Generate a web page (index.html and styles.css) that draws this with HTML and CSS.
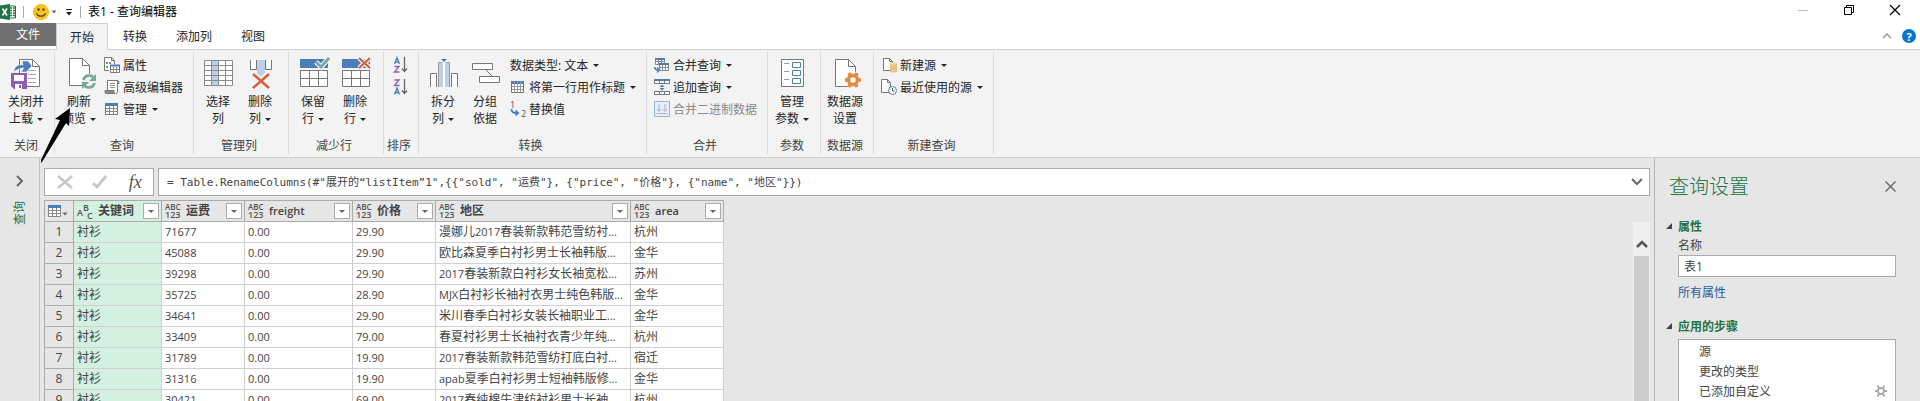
FILE: index.html
```html
<!DOCTYPE html>
<html lang="zh-CN">
<head>
    <meta charset="UTF-8">
    <meta name="viewport" content="width=device-width, initial-scale=1.0">
    <title>表1 - 查询编辑器</title>
    <link rel="stylesheet" href="styles.css">
</head>
<body>
    <!-- title bar -->
    <header class="titlebar">
        <svg class="excel" width="16" height="16" viewBox="0 0 16 16">
            <path d="M9 2h6.500v12H9z" fill="#fff" stroke="#217346"/>
            <path d="M10 4h2M13 4h2M10 6.500h2M13 6.500h2M10 9h2M13 9h2M10 11.500h2M13 11.500h2" stroke="#217346" stroke-width="1.300"/>
            <path d="M0 1.500L10 0v16L0 14.500z" fill="#217346"/>
            <path d="M2.500 4.500l4.500 7M7 4.500l-4.500 7" stroke="#fff" stroke-width="1.700"/>
        </svg>
        <span class="bar"></span>
        <button class="plain smiley" aria-label="反馈">
            <svg width="24" height="16" viewBox="0 0 24 16">
                <circle cx="8" cy="8" r="7.500" fill="#fcc419" stroke="#f5b60f"/>
                <circle cx="5.500" cy="5.500" r="1.200" fill="#444"/>
                <circle cx="10.500" cy="5.500" r="1.200" fill="#444"/>
                <path d="M3.500 9.200c1.500 4 7.500 4 9 0" fill="none" stroke="#444" stroke-width="1.200"/>
                <path d="M18.500 6.500h5L21 9.500z" fill="#666"/>
            </svg>
        </button>
        <button class="plain qat" aria-label="自定义快速访问工具栏">
            <svg width="8" height="8" viewBox="0 0 8 8"><path d="M1 1.500h6" stroke="#222"/><path d="M1 4h6L4 7.500z" fill="#222"/></svg>
        </button>
        <span class="bar"></span>
        <h1>表1 - 查询编辑器</h1>
        <div class="window-buttons">
            <button class="plain" aria-label="最小化"><svg width="10" height="10" viewBox="0 0 10 10"><path d="M0 5.500h10" stroke="#bbb"/></svg></button>
            <button class="plain" aria-label="还原"><svg width="10" height="10" viewBox="0 0 10 10"><path d="M.5 2.500h7v7h-7zM2.500 2.500v-2h7v7h-2" fill="none" stroke="#000"/></svg></button>
            <button class="plain" aria-label="关闭"><svg width="10" height="10" viewBox="0 0 10 10"><path d="M0 0l10 10M10 0L0 10" stroke="#000" stroke-width="1.200"/></svg></button>
        </div>
    </header>

    <nav class="tabs">
        <button class="tab file">文件</button>
        <button class="tab active">开始</button>
        <button class="tab">转换</button>
        <button class="tab">添加列</button>
        <button class="tab">视图</button>
        <div class="tabs-right">
            <button class="plain" aria-label="折叠功能区"><svg width="10" height="6" viewBox="0 0 10 6"><path d="M1 5l4-4 4 4" fill="none" stroke="#999" stroke-width="1.500"/></svg></button>
            <button class="plain help">?</button>
        </div>
    </nav>

    <!-- ribbon -->
    <section class="ribbon">
        <div class="group first">
            <div class="tools">
                <button class="big">
                    <svg width="34" height="34" viewBox="0 0 34 34">
                        <path d="M10.500 3.500h13l7 7v20h-20z" fill="#fff" stroke="#777"/>
                        <path d="M23.500 3.500v7h7" fill="none" stroke="#777"/>
                        <path d="M19 14.500h8M19 18.500h8M19 22.500h8M19 26.500h8" stroke="#aaa"/>
                        <path d="M5 16c0-6 5-8 9-7l-1-4 6 0 4 5-6 6h-5l3-4c-4 0-6 1-10 4z" fill="#4a7ebb" stroke="#f3f3f3" stroke-width=".6"/>
                        <path d="M2 17h16v16H5l-3-3z" fill="#8e5bb5"/>
                        <path d="M5 19h10v6H5zM6 28h7v5H6z" fill="#fff"/>
                        <path d="M10 29h2v3h-2z" fill="#8e5bb5"/>
                    </svg>
                    <span>关闭并<br>上载 <i class="caret"></i></span>
                </button>
            </div>
            <h2>关闭</h2>
        </div>

        <div class="group">
            <div class="tools">
                <button class="big">
                    <svg width="34" height="34" viewBox="0 0 34 34">
                        <path d="M7.500 2.500h13l7 7v20h-20z" fill="#fff" stroke="#777"/>
                        <path d="M20.500 2.500v7h7" fill="none" stroke="#777"/>
                        <circle cx="27" cy="25.500" r="8" fill="#f3f3f3"/>
                        <path d="M21.500 24c1-5 8-6 10-2M32.500 27c-1 5-8 6-10 2" fill="none" stroke="#76a797" stroke-width="2.600"/>
                        <path d="M34 18v7h-7zM20 33v-7h7z" fill="#76a797"/>
                    </svg>
                    <span>刷新<br>预览 <i class="caret"></i></span>
                </button>
                <div class="list">
                    <button class="small">
                        <svg width="16" height="16" viewBox="0 0 16 16">
                            <path d="M5 13.500H.5V.5h7l3 3V7" fill="#fff" stroke="#777"/><path d="M7.500.5v3h3" fill="none" stroke="#777"/>
                            <path d="M2 5h2v2H2zM2 9h2v2H2zM5 5h2v2H5z" fill="#888"/>
                            <path d="M6.500 8.500h9v7h-9z" fill="#fff" stroke="#777"/><path d="M6 7.500h10v2H6z" fill="#4a7ebb"/><path d="M9.500 10v5M12.500 10v5M7 12.500h8" stroke="#888"/>
                        </svg>属性
                    </button>
                    <button class="small">
                        <svg width="16" height="16" viewBox="0 0 16 16">
                            <path d="M3.500 11V1.500h10V13c0 1-1 1.500-2 1.500H3" fill="#fff" stroke="#777"/>
                            <path d="M13 1.500c2 0 2 2 2 3h-2M1 11.500h9v3H2.500c-1 0-2-1-1.500-3z" fill="#888" stroke="#777"/>
                            <path d="M6 4.500h5M6 6.500h5M6 8.500h5" stroke="#999"/>
                        </svg>高级编辑器
                    </button>
                    <button class="small">
                        <svg width="16" height="16" viewBox="0 0 16 16">
                            <path d="M1.500 3.500h12v10h-12z" fill="#fff" stroke="#777"/><path d="M1 2h13v3H1z" fill="#4a7ebb"/>
                            <path d="M5.500 5v8M9.500 5v8M2 7.500h11M2 10.500h11" stroke="#888"/>
                        </svg>管理<i class="caret"></i>
                    </button>
                </div>
            </div>
            <h2>查询</h2>
        </div>

        <div class="group">
            <div class="tools">
                <button class="big">
                    <svg width="34" height="34" viewBox="0 0 34 34">
                        <path d="M3.500 4.500h28v25h-28z" fill="#fff"/><path d="M10 5h7v24h-7z" fill="#bdd0e6"/>
                        <path d="M3.500 4.500h28v25h-28zM3 9.500h28M3 14.500h28M3 19.500h28M3 24.500h28M10.500 5v24M17.500 5v24M24.500 5v24" fill="none" stroke="#8a8a8a"/>
                    </svg>
                    <span>选择<br>列</span>
                </button>
                <button class="big">
                    <svg width="34" height="34" viewBox="0 0 34 34">
                        <path d="M7.500 4v9.500h6V4M28.500 4v9.500h-6V4" fill="#fff" stroke="#777"/>
                        <path d="M14 4h8v13l-4 4-4-4z" fill="#bdd0e6"/>
                        <path d="M10 18l16 14M26 18L10 32" stroke="#d65f3c" stroke-width="2.600"/>
                    </svg>
                    <span>删除<br>列 <i class="caret"></i></span>
                </button>
            </div>
            <h2>管理列</h2>
        </div>

        <div class="group">
            <div class="tools">
                <button class="big">
                    <svg width="34" height="34" viewBox="0 0 34 34">
                        <path d="M4 3h28v9H4z" fill="#4a7ebb"/>
                        <path d="M4.500 14.500h27v16h-27zM4 22.500h28M13.500 15v16M22.500 15v16" fill="#fff" stroke="#777"/>
                        <path d="M20 6l5 5 8-9" fill="none" stroke="#f3f3f3" stroke-width="5"/>
                        <path d="M20 6l5 5 8-9" fill="none" stroke="#76a797" stroke-width="2.800"/>
                    </svg>
                    <span>保留<br>行 <i class="caret"></i></span>
                </button>
                <button class="big">
                    <svg width="34" height="34" viewBox="0 0 34 34">
                        <path d="M4 3h28v9H4z" fill="#4a7ebb"/>
                        <path d="M4.500 14.500h27v16h-27zM4 22.500h28M13.500 15v16M22.500 15v16" fill="#fff" stroke="#777"/>
                        <path d="M21 2l11 10M32 2L21 12" stroke="#f3f3f3" stroke-width="4.600"/>
                        <path d="M21 2l11 10M32 2L21 12" stroke="#d65f3c" stroke-width="2.200"/>
                    </svg>
                    <span>删除<br>行 <i class="caret"></i></span>
                </button>
            </div>
            <h2>减少行</h2>
        </div>

        <div class="group sort">
            <div class="tools">
                <div class="list">
                    <button class="small" aria-label="升序排序">
                        <svg width="16" height="16" viewBox="0 0 16 16">
                            <path d="M1.500 7L4 0.500 6.500 7M2.200 5h3.600" fill="none" stroke="#4a7ebb" stroke-width="1.300"/>
                            <path d="M1.500 9.500H6L1.500 15H6.500" fill="none" stroke="#8e5bb5" stroke-width="1.300"/>
                            <path d="M11.500 0v14M9 11.500l2.500 3 2.500-3" fill="none" stroke="#666" stroke-width="1.300"/>
                        </svg>
                    </button>
                    <button class="small" aria-label="降序排序">
                        <svg width="16" height="16" viewBox="0 0 16 16">
                            <path d="M1.500 1H6L1.500 6.500H6.500" fill="none" stroke="#8e5bb5" stroke-width="1.300"/>
                            <path d="M1.500 15.500L4 9 6.500 15.500M2.200 13.500h3.600" fill="none" stroke="#4a7ebb" stroke-width="1.300"/>
                            <path d="M11.500 0v14M9 11.500l2.500 3 2.500-3" fill="none" stroke="#666" stroke-width="1.300"/>
                        </svg>
                    </button>
                </div>
            </div>
            <h2>排序</h2>
        </div>

        <div class="group">
            <div class="tools">
                <button class="big">
                    <svg width="34" height="34" viewBox="0 0 34 34">
                        <path d="M4.500 31V17.500h6V31M31.500 31V17.500h-6V31" fill="#fff" stroke="#777"/>
                        <path d="M12 6h5v25h-5zM19 6h5v25h-5z" fill="#bdd0e6"/><path d="M12.500 31V6.500h3M23.500 31V6.500h-3" fill="none" stroke="#999"/>
                        <path d="M17 6h2v25h-2z" fill="#fff"/>
                        <path d="M15 3h6l-3 3z" fill="#4a7ebb"/>
                    </svg>
                    <span>拆分<br>列 <i class="caret"></i></span>
                </button>
                <button class="big">
                    <svg width="34" height="34" viewBox="0 0 34 34">
                        <path d="M4.500 7.500h20v6h-20zM11.500 20.500h20v6h-20z" fill="#fff" stroke="#777"/><path d="M18 14l6 6" stroke="#777"/>
                    </svg>
                    <span>分组<br>依据</span>
                </button>
                <div class="list">
                    <button class="small">数据类型: 文本<i class="caret"></i></button>
                    <button class="small">
                        <svg width="16" height="16" viewBox="0 0 16 16">
                            <path d="M1.500 2.500h12v11h-12z" fill="#fff" stroke="#777"/><path d="M1 2h13v3H1z" fill="#4a7ebb"/>
                            <path d="M4.500 2v11M7.500 2v11M10.500 2v11M2 7.500h11M2 10.500h11" stroke="#999"/>
                        </svg>将第一行用作标题<i class="caret"></i>
                    </button>
                    <button class="small">
                        <svg width="16" height="16" viewBox="0 0 16 16">
                            <text x="0" y="7" class="digit">1</text><text x="11" y="16" class="digit">2</text>
                            <path d="M1.500 8c0 3 1 4 5 4" fill="none" stroke="#4a7ebb" stroke-width="2"/><path d="M5.500 8.500l4 3.500-4 3.500z" fill="#4a7ebb"/>
                        </svg>替换值
                    </button>
                </div>
            </div>
            <h2>转换</h2>
        </div>

        <div class="group">
            <div class="tools">
                <div class="list">
                    <button class="small">
                        <svg width="16" height="16" viewBox="0 0 16 16">
                            <path d="M1.500 1.500h9v6h-9zM1 4.500h10M4.500 2v6M7.500 2v6" fill="#fff" stroke="#888"/><path d="M1 1h10v2H1z" fill="#4a7ebb"/>
                            <path d="M5.500 7.500h9v6h-9zM5 10.500h10M8.500 8v6M11.500 8v6" fill="#fff" stroke="#888"/><path d="M5 6h10v2H5z" fill="#4a7ebb"/>
                            <path d="M.8 10c0 2 1 3 3 3M3 10.500l2.500 2.300L3 15.500" fill="none" stroke="#4a7ebb" stroke-width="1.500"/>
                        </svg>合并查询<i class="caret"></i>
                    </button>
                    <button class="small">
                        <svg width="16" height="16" viewBox="0 0 16 16">
                            <path d="M.5 1.500h15v3H.5zM5.500 1v4M10.500 1v4M.5 12.500h15v3H.5zM5.500 12v4M10.500 12v4" fill="#fff" stroke="#777"/><path d="M0 0h16v2H0z" fill="#4a7ebb"/>
                            <path d="M5.500 8L8 5.500 10.500 8zM5.500 9L8 11.500 10.500 9z" fill="#4a7ebb"/>
                        </svg>追加查询<i class="caret"></i>
                    </button>
                    <button class="small" disabled>
                        <svg width="16" height="16" viewBox="0 0 16 16">
                            <path d="M.5.5h15v15H.5z" fill="#e9eff8" stroke="#9fb4d0"/>
                            <path d="M5 3v7M3 8l2 2.500L7 8M11 3v7M9 8l2 2.500L13 8M2.500 12.500h11" fill="none" stroke="#9fb4d0"/>
                        </svg>合并二进制数据
                    </button>
                </div>
            </div>
            <h2>合并</h2>
        </div>

        <div class="group">
            <div class="tools">
                <button class="big">
                    <svg width="34" height="34" viewBox="0 0 34 34">
                        <path d="M6.500 3.500h22v27h-22z" fill="#fff" stroke="#777"/>
                        <path d="M9 7.500h5M9 15.500h5M9 23.500h5" stroke="#999"/>
                        <path d="M17.500 6.500h8v5h-8zM17.500 14.500h8v5h-8zM17.500 22.500h8v5h-8z" fill="#fff" stroke="#4a7ebb"/>
                    </svg>
                    <span>管理<br>参数 <i class="caret"></i></span>
                </button>
            </div>
            <h2>参数</h2>
        </div>

        <div class="group">
            <div class="tools">
                <button class="big">
                    <svg width="34" height="34" viewBox="0 0 34 34">
                        <path d="M7.500 3.500h13l7 7v20h-20z" fill="#fff" stroke="#777"/><path d="M20.500 3.500v7h7" fill="none" stroke="#777"/>
                        <circle cx="25" cy="24" r="8.500" fill="#f3f3f3"/>
                        <circle cx="25" cy="24" r="4.500" fill="#fff" stroke="#e38b43" stroke-width="3.500"/>
                        <path d="M30 24h3M17 24h3M27.500 28.300l1.500 2.700M21 17l1.500 2.700M22.500 28.300L21 31M29 17l-1.500 2.700" stroke="#e38b43" stroke-width="3.600"/>
                    </svg>
                    <span>数据源<br>设置</span>
                </button>
            </div>
            <h2>数据源</h2>
        </div>

        <div class="group">
            <div class="tools">
                <div class="list">
                    <button class="small">
                        <svg width="16" height="16" viewBox="0 0 16 16">
                            <path d="M2.500 1.500h6l3 3v9h-9z" fill="#fff" stroke="#777"/><path d="M8.500 1.500v3h3" fill="none" stroke="#777"/>
                            <path d="M9 6.500c0-1.500 7-1.500 7 0v8c0 1.500-7 1.500-7 0z" fill="#eac282"/><ellipse cx="12.500" cy="6.700" rx="2.700" ry=".8" fill="#f5e0bb"/>
                        </svg>新建源<i class="caret"></i>
                    </button>
                    <button class="small">
                        <svg width="16" height="16" viewBox="0 0 16 16">
                            <path d="M.5.500h6l3 3v10h-9z" fill="#fff" stroke="#777"/><path d="M6.500.5v3h3" fill="none" stroke="#777"/>
                            <circle cx="11.500" cy="11.500" r="4" fill="#fff" stroke="#4a7ebb"/><path d="M11.500 9v3h2" fill="none" stroke="#555"/>
                        </svg>最近使用的源<i class="caret"></i>
                    </button>
                </div>
            </div>
            <h2>新建查询</h2>
        </div>
    </section>

    <div class="workspace">
        <aside class="queries">
            <button class="plain" aria-label="展开"><svg width="8" height="12" viewBox="0 0 8 12"><path d="M1 1l5 5-5 5" fill="none" stroke="#666" stroke-width="2"/></svg></button>
            <span>查询</span>
        </aside>

        <main>
            <div class="formula-row">
                <div class="formula-tools">
                    <button class="plain" aria-label="取消"><svg width="16" height="14" viewBox="0 0 16 14"><path d="M1 1l14 12M15 1L1 13" stroke="#c6c6c6" stroke-width="2.600"/></svg></button>
                    <button class="plain" aria-label="确认"><svg width="16" height="14" viewBox="0 0 16 14"><path d="M1 8l4 4L14 1" fill="none" stroke="#c6c6c6" stroke-width="2.800"/></svg></button>
                    <button class="plain fx">fx</button>
                </div>
                <div class="formula">
                    <input type="text" aria-label="公式" value='= Table.RenameColumns(#"展开的“listItem”1",{{"sold", "运费"}, {"price", "价格"}, {"name", "地区"}})'>
                    <button class="plain" aria-label="展开公式栏"><svg width="12" height="8" viewBox="0 0 12 8"><path d="M1 1l5 5 5-5" fill="none" stroke="#666" stroke-width="2"/></svg></button>
                </div>
            </div>

            <div class="preview">
                <table>
                    <colgroup>
                        <col class="c-num"><col class="c-key"><col class="c-val"><col class="c-freight"><col class="c-val"><col class="c-name"><col class="c-area">
                    </colgroup>
                    <thead>
                        <tr>
                            <th>
                                <button class="plain corner" aria-label="表菜单"><svg width="20" height="14" viewBox="0 0 20 14"><path d="M.5 1.500h12v11H.5zM0 6.500h13M0 9.500h13M4.500 3v10M8.500 3v10" fill="#fff" stroke="#888"/><path d="M0 1h13v3H0z" fill="#4a7ebb"/><path d="M14.500 8.500h5L17 11.500z" fill="#666"/></svg></button>
                            </th>
                            <th class="key"><div class="head"><svg class="type" width="17" height="16" viewBox="0 0 17 16"><text x="0" y="13" class="abc">A</text><text x="6" y="8" class="abc">B</text><text x="10" y="16" class="abc">C</text></svg><span>关键词</span><button class="filter" aria-label="筛选"></button></div></th>
                            <th><div class="head"><svg class="type" width="17" height="16" viewBox="0 0 17 16"><text x="0" y="7">ABC</text><text x="0" y="15" class="n">123</text></svg><span>运费</span><button class="filter" aria-label="筛选"></button></div></th>
                            <th><div class="head"><svg class="type" width="17" height="16" viewBox="0 0 17 16"><text x="0" y="7">ABC</text><text x="0" y="15" class="n">123</text></svg><span class="latin">freight</span><button class="filter" aria-label="筛选"></button></div></th>
                            <th><div class="head"><svg class="type" width="17" height="16" viewBox="0 0 17 16"><text x="0" y="7">ABC</text><text x="0" y="15" class="n">123</text></svg><span>价格</span><button class="filter" aria-label="筛选"></button></div></th>
                            <th><div class="head"><svg class="type" width="17" height="16" viewBox="0 0 17 16"><text x="0" y="7">ABC</text><text x="0" y="15" class="n">123</text></svg><span>地区</span><button class="filter" aria-label="筛选"></button></div></th>
                            <th><div class="head"><svg class="type" width="17" height="16" viewBox="0 0 17 16"><text x="0" y="7">ABC</text><text x="0" y="15" class="n">123</text></svg><span class="latin">area</span><button class="filter" aria-label="筛选"></button></div></th>
                        </tr>
                    </thead>
                    <tbody>
                        <tr><th>1</th><td class="key">衬衫</td><td class="num">71677</td><td class="num">0.00</td><td class="num">29.90</td><td>漫娜儿<small>2017</small>春装新款韩范雪纺衬<small>...</small></td><td>杭州</td></tr>
                        <tr><th>2</th><td class="key">衬衫</td><td class="num">45088</td><td class="num">0.00</td><td class="num">29.90</td><td>欧比森夏季白衬衫男士长袖韩版<small>...</small></td><td>金华</td></tr>
                        <tr><th>3</th><td class="key">衬衫</td><td class="num">39298</td><td class="num">0.00</td><td class="num">29.90</td><td><small>2017</small>春装新款白衬衫女长袖宽松<small>...</small></td><td>苏州</td></tr>
                        <tr><th>4</th><td class="key">衬衫</td><td class="num">35725</td><td class="num">0.00</td><td class="num">28.90</td><td><small>MJX</small>白衬衫长袖衬衣男士纯色韩版<small>...</small></td><td>金华</td></tr>
                        <tr><th>5</th><td class="key">衬衫</td><td class="num">34641</td><td class="num">0.00</td><td class="num">29.90</td><td>米川春季白衬衫女装长袖职业工<small>...</small></td><td>金华</td></tr>
                        <tr><th>6</th><td class="key">衬衫</td><td class="num">33409</td><td class="num">0.00</td><td class="num">79.00</td><td>春夏衬衫男士长袖衬衣青少年纯<small>...</small></td><td>杭州</td></tr>
                        <tr><th>7</th><td class="key">衬衫</td><td class="num">31789</td><td class="num">0.00</td><td class="num">19.90</td><td><small>2017</small>春装新款韩范雪纺打底白衬<small>...</small></td><td>宿迁</td></tr>
                        <tr><th>8</th><td class="key">衬衫</td><td class="num">31316</td><td class="num">0.00</td><td class="num">19.90</td><td><small>apab</small>夏季白衬衫男士短袖韩版修<small>...</small></td><td>金华</td></tr>
                        <tr><th>9</th><td class="key">衬衫</td><td class="num">30421</td><td class="num">0.00</td><td class="num">69.00</td><td><small>2017</small>春纯棉牛津纺衬衫男士长袖<small>...</small></td><td>杭州</td></tr>
                    </tbody>
                </table>
                <div class="scrollbar">
                    <button class="plain" aria-label="向上滚动"><svg width="12" height="9" viewBox="0 0 12 9"><path d="M1 8l5-5 5 5" fill="none" stroke="#555" stroke-width="2.600"/></svg></button>
                    <div class="thumb"></div>
                </div>
            </div>
        </main>

        <aside class="settings">
            <div class="settings-head">
                <h2>查询设置</h2>
                <button class="plain" aria-label="关闭窗格"><svg width="11" height="11" viewBox="0 0 11 11"><path d="M.5.5l10 10M10.500.5l-10 10" stroke="#666" stroke-width="1.400"/></svg></button>
            </div>
            <h3>属性</h3>
            <div class="section">
                <label for="name">名称</label>
                <input type="text" id="name" value="表1">
                <a href="#">所有属性</a>
            </div>
            <h3>应用的步骤</h3>
            <ul class="steps">
                <li>源</li>
                <li>更改的类型</li>
                <li>已添加自定义
                    <button class="plain" aria-label="编辑设置"><svg width="12" height="12" viewBox="0 0 12 12"><circle cx="6" cy="6" r="3" fill="none" stroke="#aaa" stroke-width="1.800"/><path d="M9 6h3M0 6h3M8 9l1.500 2.500M4 3L2.500.5M4 9l-1.500 2.500M8 3L9.500.5" stroke="#aaa" stroke-width="1.800"/></svg></button>
                </li>
            </ul>
        </aside>
    </div>

    <!-- pointer over the refresh button -->
    <svg class="pointer" width="32" height="58" viewBox="0 0 32 58"><path d="M30 2L15 13l5 1L1 54v3l1-1L26 17l3 3z" fill="#000"/></svg>
</body>
</html>
```

FILE: styles.css
```css
* {
    box-sizing: border-box;
}
body {
    margin: 0;
    height: 100vh;
    overflow: hidden;
    display: flex;
    flex-direction: column;
    background: #fff;
    color: #262626;
    font-family: "Open Sans", "Noto Sans CJK SC", sans-serif;
    font-size: 12px;
    line-height: 17px;
}
button, input {
    font: inherit;
    color: inherit;
}
button {
    border: 0;
    padding: 0;
    background: none;
}
svg {
    flex: none;
    overflow: visible;
}
h1, h2, h3 {
    margin: 0;
    font-size: 12px;
    font-weight: normal;
}
.plain {
    display: flex;
    align-items: center;
    justify-content: center;
}

/* title bar */
.titlebar {
    display: flex;
    align-items: center;
    height: 23px;
    flex: none;
}
.bar {
    width: 1px;
    height: 12px;
    margin: 0 7px;
    background: #aaa;
}
.smiley {
    margin: 0 8px 0 2px;
}
.titlebar h1 {
    color: #000;
}
.window-buttons {
    display: flex;
    align-self: flex-start;
    margin-left: auto;
    padding-right: 2px;
}
.window-buttons button {
    width: 46px;
    height: 20px;
}

/* tabs */
.tabs {
    display: flex;
    height: 27px;
    flex: none;
    border-bottom: 1px solid #d0d0d0;
}
.tab {
    height: 26px;
    padding: 0 14px;
    margin-right: 1px;
}
.tab.file {
    height: 23px;
    padding: 0 16px;
    margin: 0;
    background: #6f6f6f;
    color: #fff;
}
.tab.active {
    height: 27px;
    padding: 0 13px;
    margin-right: 1px;
    border: 1px solid #d0d0d0;
    border-bottom: 0;
    background: #f3f3f3;
}
.tabs-right {
    display: flex;
    align-items: center;
    gap: 10px;
    margin-left: auto;
    padding-right: 4px;
}
.help {
    width: 14px;
    height: 14px;
    border-radius: 50%;
    background: #0a73d0;
    color: #fff;
    font-weight: bold;
    font-size: 11px;
}

/* ribbon */
.ribbon {
    display: flex;
    flex: none;
    height: 108px;
    padding: 2px 0 3px;
    background: #f3f3f3;
    border-bottom: 1px solid #d0d0d0;
}
.group {
    display: flex;
    flex-direction: column;
    justify-content: space-between;
    padding: 2px 7px 0 3px;
    border-right: 1px solid #dcdcdc;
}
.group.first {
    padding-left: 5px;
}
.group h2 {
    text-align: center;
    color: #444;
}
.tools {
    display: flex;
}
.big {
    display: flex;
    flex-direction: column;
    align-items: center;
    gap: 3px;
    width: 42px;
    padding-top: 2px;
}
.caret {
    display: inline-block;
    vertical-align: middle;
    margin-left: 1px;
    border: 3px solid transparent;
    border-top-color: #262626;
    border-bottom: 0;
}
.list {
    padding-left: 4px;
}
.small {
    display: flex;
    align-items: center;
    height: 22px;
    padding-right: 3px;
    white-space: nowrap;
}
.small svg {
    margin-right: 3px;
}
.small .caret {
    margin-left: 5px;
}
.small:disabled {
    color: #8a8a8a;
}
.sort .list {
    padding-left: 6px;
}
.sort .small {
    padding: 0;
}
.sort .small svg {
    margin: 0;
}
.sort h2 {
    white-space: nowrap;
}
.digit {
    font-size: 9px;
    fill: #555;
}

/* workspace */
.workspace {
    display: flex;
    flex: 1;
    min-height: 0;
    background: #e6e6e6;
}
.queries {
    display: flex;
    flex-direction: column;
    align-items: center;
    gap: 14px;
    width: 40px;
    padding-top: 17px;
    border-right: 1px solid #c0c0c0;
    color: #217346;
}
.queries span {
    writing-mode: vertical-rl;
    text-orientation: sideways;
    transform: rotate(180deg);
}
main {
    flex: 1;
    min-width: 0;
    display: flex;
    flex-direction: column;
    padding: 10px 4px 0;
}
.formula-row {
    display: flex;
    gap: 4px;
    margin-bottom: 4px;
}
.formula-tools, .formula {
    display: flex;
    height: 28px;
    background: #fff;
    border: 1px solid #ababab;
}
.formula-tools {
    width: 110px;
    padding-left: 2px;
}
.formula-tools button {
    flex: 1;
}
.fx {
    font: italic 18px "Liberation Serif", serif;
    color: #555;
}
.formula {
    flex: 1;
}
.formula input {
    flex: 1;
    border: 0;
    padding: 0 8px;
    background: none;
    color: #444;
    font-family: "DejaVu Sans Mono", "Noto Sans CJK SC", monospace;
    font-size: 11px;
}
.formula button {
    width: 24px;
}

/* data preview */
.preview {
    display: flex;
    justify-content: space-between;
    flex: 1;
    min-height: 0;
}
table {
    align-self: flex-start;
    width: 680px;
    table-layout: fixed;
    border-collapse: collapse;
    color: #444;
}
.c-num { width: 29px; }
.c-key { width: 88px; }
.c-val { width: 83px; }
.c-freight { width: 108px; }
.c-name { width: 195px; }
.c-area { width: 93px; }
th, td {
    height: 21px;
    padding: 0 3px;
    line-height: 18px;
    white-space: nowrap;
    overflow: hidden;
}
td {
    background: #fff;
    border: 1px solid #d0d0d0;
}
th {
    background: #e6e6e6;
    border: 1px solid #ababab;
}
tbody th {
    font-weight: normal;
    text-align: center;
}
thead th {
    padding: 0 2px 0 3px;
}
.key {
    background: #d3f0e0;
}
.num, td small {
    font-size: 11px;
}
.head {
    display: flex;
    align-items: center;
    height: 20px;
    text-align: left;
}
.head span {
    flex: 1;
    padding-left: 4px;
}
.head .latin {
    font-size: 11px;
    font-weight: 600;
}
.type text {
    font-size: 8px;
    font-weight: 600;
    fill: #555;
}
.type .n, .type .abc {
    font-size: 9px;
}
.filter {
    display: flex;
    align-items: center;
    justify-content: center;
    width: 16px;
    height: 16px;
    background: #fff;
    border: 1px solid #ababab;
}
.filter::before {
    content: "";
    border: 3px solid transparent;
    border-top-color: #666;
    border-bottom: 0;
}
.scrollbar {
    display: flex;
    flex-direction: column;
    width: 17px;
    margin-top: 22px;
    padding: 0 1px;
    background: #f0f0f0;
}
.scrollbar button {
    height: 34px;
    padding-top: 8px;
}
.thumb {
    flex: 1;
    background: #cdcdcd;
}

/* query settings */
.settings {
    width: 266px;
    padding: 11px 24px 0 11px;
    border-left: 1px solid #b5b5b5;
}
.settings-head {
    display: flex;
    align-items: center;
    justify-content: space-between;
    height: 34px;
    margin-bottom: 13px;
    padding-left: 3px;
}
.settings-head h2 {
    color: #217346;
    font-size: 20px;
    font-weight: 300;
}
h3 {
    display: flex;
    align-items: center;
    gap: 6px;
    height: 20px;
    color: #217346;
    font-weight: bold;
}
h3::before {
    content: "";
    border-left: 6px solid transparent;
    border-bottom: 6px solid #444;
}
.section {
    display: flex;
    flex-direction: column;
    align-items: flex-start;
    margin: 0 0 14px 12px;
    color: #444;
    line-height: 19px;
}
.section input {
    width: 100%;
    height: 22px;
    margin-bottom: 6px;
    padding: 0 5px;
    border: 1px solid #ababab;
    background: #fff;
}
.section a {
    color: #2b5c9e;
    text-decoration: none;
}
.steps {
    height: 200px;
    margin: 3px 0 0 12px;
    padding: 1px 8px 0 20px;
    list-style: none;
    background: #fff;
    border: 1px solid #ababab;
    color: #444;
}
.steps li {
    display: flex;
    align-items: center;
    justify-content: space-between;
    height: 20px;
}

.pointer {
    position: absolute;
    left: 40px;
    top: 106px;
}
```
